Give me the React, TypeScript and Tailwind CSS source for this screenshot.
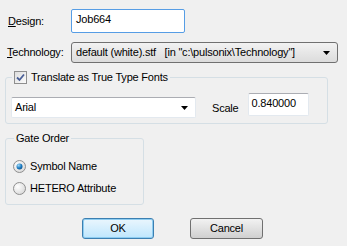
import React, { useState } from 'react';

const Arrow: React.FC = () => (
  <svg width="7" height="4" viewBox="0 0 7 4" className="shrink-0">
    <path d="M0 0 H7 L3.5 4 Z" fill="#000" />
  </svg>
);

const Radio: React.FC<{ checked: boolean; label: string; onClick: () => void }> = ({ checked, label, onClick }) => (
  <div className="flex items-center h-[13px] cursor-default" onClick={onClick}>
    <svg width="13" height="13" viewBox="0 0 13 13" className="shrink-0">
      <defs>
        <radialGradient id="rbg" cx="0.35" cy="0.35" r="0.8">
          <stop offset="0" stopColor="#ffffff" />
          <stop offset="1" stopColor="#d4d4d4" />
        </radialGradient>
        <radialGradient id="rdot" cx="0.35" cy="0.3" r="0.8">
          <stop offset="0" stopColor="#9fd8f7" />
          <stop offset="0.6" stopColor="#1b7ac0" />
          <stop offset="1" stopColor="#0d4f86" />
        </radialGradient>
      </defs>
      <circle cx="6.5" cy="6.5" r="6" fill="url(#rbg)" stroke="#8f8f8f" strokeWidth="1" />
      {checked && <circle cx="6.5" cy="6.5" r="3" fill="url(#rdot)" />}
    </svg>
    <span className="ml-[4px]">{label}</span>
  </div>
);

const App: React.FC = () => {
  const [translate, setTranslate] = useState(true);
  const [order, setOrder] = useState<'symbol' | 'hetero'>('symbol');

  return (
    <div
      className="w-[347px] h-[246px] bg-[#f0f0f0] text-[11px] tracking-[-0.2px] text-black leading-none overflow-hidden"
      style={{ fontFamily: '"Liberation Sans", Arial, sans-serif' }}
    >
      {/* Design */}
      <div className="flex items-center pt-[9px] pl-[8px]">
        <span className="w-[63px]"><span className="underline">D</span>esign:</span>
        <div className="w-[114px] h-[24px] bg-white border border-[#569de5] rounded-[2px] pl-[4px] pt-[4px]">
          Job664
        </div>
      </div>

      {/* Technology */}
      <div className="flex items-center mt-[9px] pl-[7px]">
        <span className="w-[64px]"><span className="underline">T</span>echnology:</span>
        <div className="w-[267px] h-[21px] border border-[#707070] rounded-[3px] bg-gradient-to-b from-[#f2f2f2] to-[#dcdcdc] flex items-center pl-[4px] pr-[7px]">
          <span className="flex-1 whitespace-pre">default (white).stf   [in "c:\pulsonix\Technology"]</span>
          <Arrow />
        </div>
      </div>

      {/* Translate group */}
      <fieldset className="ml-[5px] mt-[8px] w-[323px] h-[53px] border border-[#d5dfe5] rounded-[3px] pl-[5px]">
        <legend className="px-[2px] ml-[1px] flex items-center">
          <span
            className="w-[13px] h-[13px] border border-[#8f8f8f] bg-gradient-to-br from-[#dedede] to-[#fbfbfb] flex items-center justify-center"
            onClick={() => setTranslate(!translate)}
          >
            {translate && (
              <svg width="9" height="9" viewBox="0 0 9 9">
                <path d="M1 4.5 L3.5 7 L8 1.5" fill="none" stroke="#4a5f97" strokeWidth="1.8" />
              </svg>
            )}
          </span>
          <span className="ml-[4px]">Translate as True Type Fonts</span>
        </legend>
        <div className="flex items-start mt-[9px]">
          <div className="mt-[4px] w-[185px] h-[21px] bg-white border border-[#e3e9ef] border-t-[#abadb3] rounded-[2px] flex items-center pl-[3px] pr-[7px]">
            <span className="flex-1">Arial</span>
            <Arrow />
          </div>
          <span className="ml-[16px] mt-[10px]">Scale</span>
          <div className="ml-[9px] w-[61px] h-[23px] bg-white border border-[#e3e9ef] border-t-[#abadb3] rounded-[2px] pl-[3px] pt-[4px]">
            0.840000
          </div>
        </div>
      </fieldset>

      {/* Gate order group */}
      <fieldset className="ml-[5px] mt-[9px] w-[139px] h-[72px] border border-[#d5dfe5] rounded-[3px] pl-[7px]">
        <legend className="px-[2px] ml-[1px]">Gate Order</legend>
        <div className="flex flex-col gap-[9px] mt-[16px]">
          <Radio checked={order === 'symbol'} label="Symbol Name" onClick={() => setOrder('symbol')} />
          <Radio checked={order === 'hetero'} label="HETERO Attribute" onClick={() => setOrder('hetero')} />
        </div>
      </fieldset>

      {/* Buttons */}
      <div className="flex mt-[13px] pl-[82px] gap-[36px]">
        <button className="w-[72px] h-[21px] border border-[#3c7fb1] rounded-[3px] bg-gradient-to-b from-[#eaf6fd] to-[#bee6fd] shadow-[0_0_0_1px_#8ecdf1_inset]">
          OK
        </button>
        <button className="w-[73px] h-[21px] border border-[#707070] rounded-[3px] bg-gradient-to-b from-[#f2f2f2] to-[#d0d0d0]">
          Cancel
        </button>
      </div>
    </div>
  );
};

export default App;
